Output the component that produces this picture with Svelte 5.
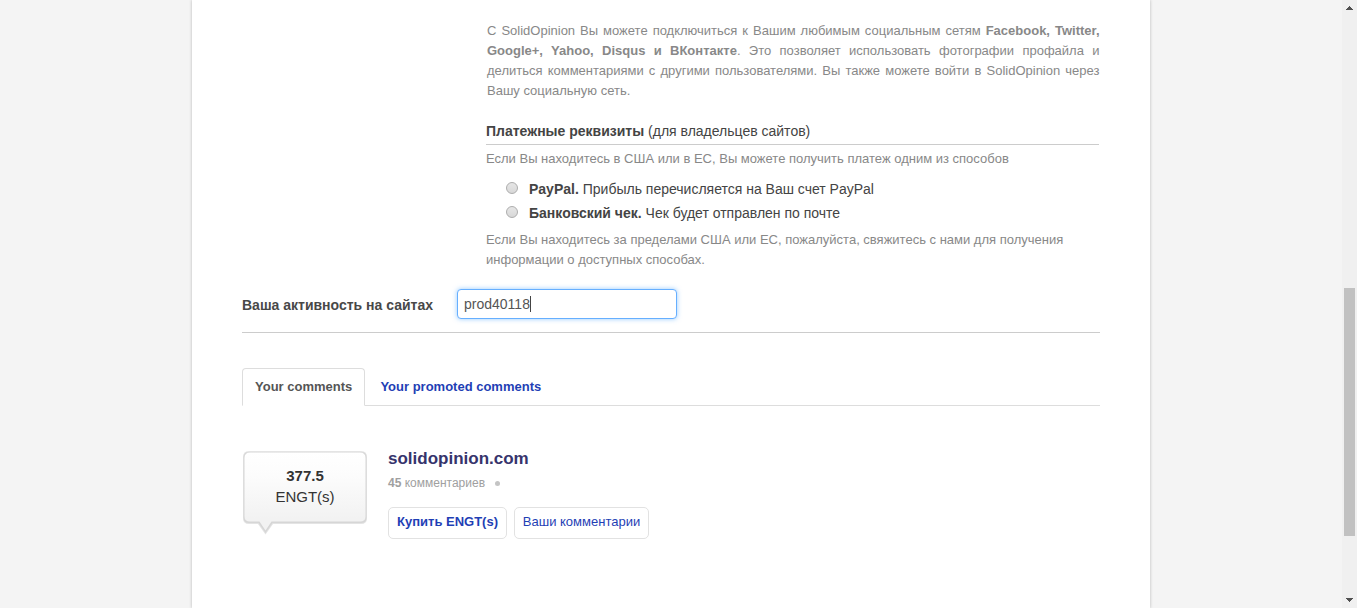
<script>
  let site = $state('prod40118');
  let payment = $state('');
  const methods = [
    { id: 'paypal', name: 'PayPal.', text: 'Прибыль перечисляется на Ваш счет PayPal' },
    { id: 'check', name: 'Банковский чек.', text: 'Чек будет отправлен по почте' }
  ];
</script>

<div class="page">
  <div class="gutter"></div>
  <main class="sheet">
    <section class="details">
      <p class="social">С SolidOpinion Вы можете подключиться к Вашим любимым социальным сетям <b>Facebook, Twitter, Google+, Yahoo, Disqus и ВКонтакте</b>. Это позволяет использовать фотографии профайла и делиться комментариями с другими пользователями. Вы также можете войти в SolidOpinion через Вашу социальную сеть.</p>
      <h3><b>Платежные реквизиты</b> (для владельцев сайтов)</h3>
      <p class="hint">Если Вы находитесь в США или в ЕС, Вы можете получить платеж одним из способов</p>
      <div class="methods">
        {#each methods as m}
          <label class="method">
            <input type="radio" name="payment" value={m.id} bind:group={payment} />
            <span><b>{m.name}</b> {m.text}</span>
          </label>
        {/each}
      </div>
      <p class="outside">Если Вы находитесь за пределами США или ЕС, пожалуйста, свяжитесь с нами для получения информации о доступных способах.</p>
    </section>

    <div class="activity">
      <b>Ваша активность на сайтах</b>
      <div class="field"><span>{site}</span><i class="caret"></i></div>
    </div>

    <nav class="tabs">
      <span class="tab active">Your comments</span>
      <span class="tab">Your promoted comments</span>
      <span class="rest"></span>
    </nav>

    <section class="site">
      <div class="bubble">
        <svg width="128" height="88" viewBox="0 0 128 88">
          <defs>
            <linearGradient id="fill" x1="0" y1="0" x2="0" y2="1">
              <stop offset="0" stop-color="#fff" />
              <stop offset="0.3" stop-color="#fcfcfc" />
              <stop offset="0.85" stop-color="#f2f2f2" />
              <stop offset="1" stop-color="#f2f2f2" />
            </linearGradient>
          </defs>
          <path d="M7 3H119Q125 3 125 9V70Q125 76 119 76H31L23.500 86.500L16 76H7Q1 76 1 70V9Q1 3 7 3Z" fill="#e4e4e4" />
          <path d="M7 4H119Q124.500 4 124.500 9.500V69.500Q124.500 75 119 75H30.500L23.500 85L16.500 75H7Q1.500 75 1.500 69.500V9.500Q1.500 4 7 4Z" fill="#d6d6d6" />
          <path d="M8 4.500H118Q123.500 4.500 123.500 10V68.500Q123.500 73.500 118 73.500H29.500L23.500 82.500L17.500 73.500H8Q2.500 73.500 2.500 68.500V10Q2.500 4.500 8 4.500Z" fill="url(#fill)" />
        </svg>
        <div class="amount"><b>377.5</b><span>ENGT(s)</span></div>
      </div>
      <div class="info">
        <h2>solidopinion.com</h2>
        <div class="count"><span><b>45</b> комментариев</span><i class="dot"></i></div>
        <div class="buttons">
          <button class="strong">Купить ENGT(s)</button>
          <button>Ваши комментарии</button>
        </div>
      </div>
    </section>
  </main>
  <div class="gutter"></div>
  <div class="scrollbar">
    <svg width="7" height="4" viewBox="0 0 7 4" shape-rendering="crispEdges"><path d="M3 0h1v1h1v1h1v1h1v1H0V3h1V2h1V1h1z" fill="#505050" /></svg>
    <div class="track"><div class="thumb"></div></div>
    <svg width="7" height="4" viewBox="0 0 7 4" shape-rendering="crispEdges"><path d="M0 0h7v1H6v1H5v1H4v1H3V3H2V2H1V1H0z" fill="#505050" /></svg>
  </div>
</div>

<style>
  :global(body) { margin: 0; overflow: hidden; }
  .page {
    display: flex;
    width: 1357px;
    height: 608px;
    overflow: hidden;
    background: #f4f4f4;
    font-family: "Liberation Sans", Arial, sans-serif;
    font-size: 13px;
    line-height: 20px;
    color: #888;
  }
  .page * { box-sizing: border-box; }
  .gutter { width: 192px; }
  .sheet {
    width: 958px;
    padding: 21px 50px 0;
    background: #fff;
    box-shadow: 0 0 3px rgba(0, 0, 0, 0.25);
  }
  p, h2, h3 { margin: 0; }
  .details { margin-left: 244px; width: 613px; }
  .social { width: 612.5px; margin-left: 1px; text-align: justify; }
  h3 {
    margin-top: 20px;
    height: 24px;
    border-bottom: 1px solid #ccc;
    font-size: 14px;
    font-weight: 400;
    color: #444;
  }
  .hint { margin-top: 4px; }
  .methods { margin: 8px 0 5px 20px; }
  .method { display: flex; height: 24px; font-size: 14px; line-height: 24px; color: #444; }
  .method input {
    appearance: none;
    width: 12px;
    height: 12px;
    margin: 5px 11px 0 0;
    border: 1px solid #adadad;
    border-radius: 50%;
    background: linear-gradient(#e6e6e6, #d8d8d8);
  }
  .activity {
    display: flex;
    height: 63px;
    border-bottom: 1px solid #ccc;
    padding-top: 19px;
    color: #484848;
    font-size: 14px;
  }
  .activity b { width: 215px; padding-top: 6px; }
  .field {
    display: flex;
    align-items: center;
    width: 220px;
    height: 30px;
    padding-left: 6px;
    border: 1px solid #66afff;
    border-radius: 4px;
    background: #fff;
    box-shadow: 0 0 5px rgba(82, 168, 255, 0.6);
    color: #555;
  }
  .caret { width: 1px; height: 16px; background: #444; }
  .tabs { display: flex; height: 38px; margin-top: 35px; font-weight: 700; line-height: 36px; }
  .tab { padding: 1px 15px 0 15.4px; border-bottom: 1px solid #ddd; color: #1f3fb5; }
  .tab.active {
    width: 123px;
    padding: 0 0 0 12px;
    border: 1px solid #ddd;
    border-bottom-color: transparent;
    border-radius: 4px 4px 0 0;
    color: #555;
  }
  .rest { flex: 1; border-bottom: 1px solid #ddd; }
  .site { display: flex; margin-top: 42px; }
  .bubble { position: relative; width: 146px; height: 88px; }
  .bubble svg { display: block; }
  .amount {
    position: absolute;
    top: 17px;
    left: 0;
    width: 126px;
    display: flex;
    flex-direction: column;
    align-items: center;
    font-size: 15px;
    line-height: 21px;
    color: #333;
  }
  h2 { font-size: 17px; line-height: 22px; color: #36346c; }
  .count { display: flex; align-items: center; margin-top: 3px; font-size: 12px; color: #a0a0a0; }
  .dot { width: 5px; height: 5px; margin-left: 10px; border-radius: 50%; background: #c4c4c4; }
  .buttons { display: flex; gap: 7px; margin-top: 14px; }
  button {
    width: 135px;
    height: 32px;
    padding: 0 0 3px;
    border: 1px solid #e2e2e2;
    border-radius: 5px;
    background: #fff;
    color: #1f3fb5;
    font: 13px "Liberation Sans", Arial, sans-serif;
    white-space: nowrap;
  }
  .strong { width: 119px; font-weight: 700; }
  .scrollbar {
    display: flex;
    flex-direction: column;
    align-items: center;
    justify-content: space-between;
    width: 15px;
    padding: 6px 0;
    background: #f0f0f0;
  }
  .track { flex: 1; padding-top: 278px; }
  .thumb { width: 11px; height: 248px; background: #c1c1c1; }
</style>
